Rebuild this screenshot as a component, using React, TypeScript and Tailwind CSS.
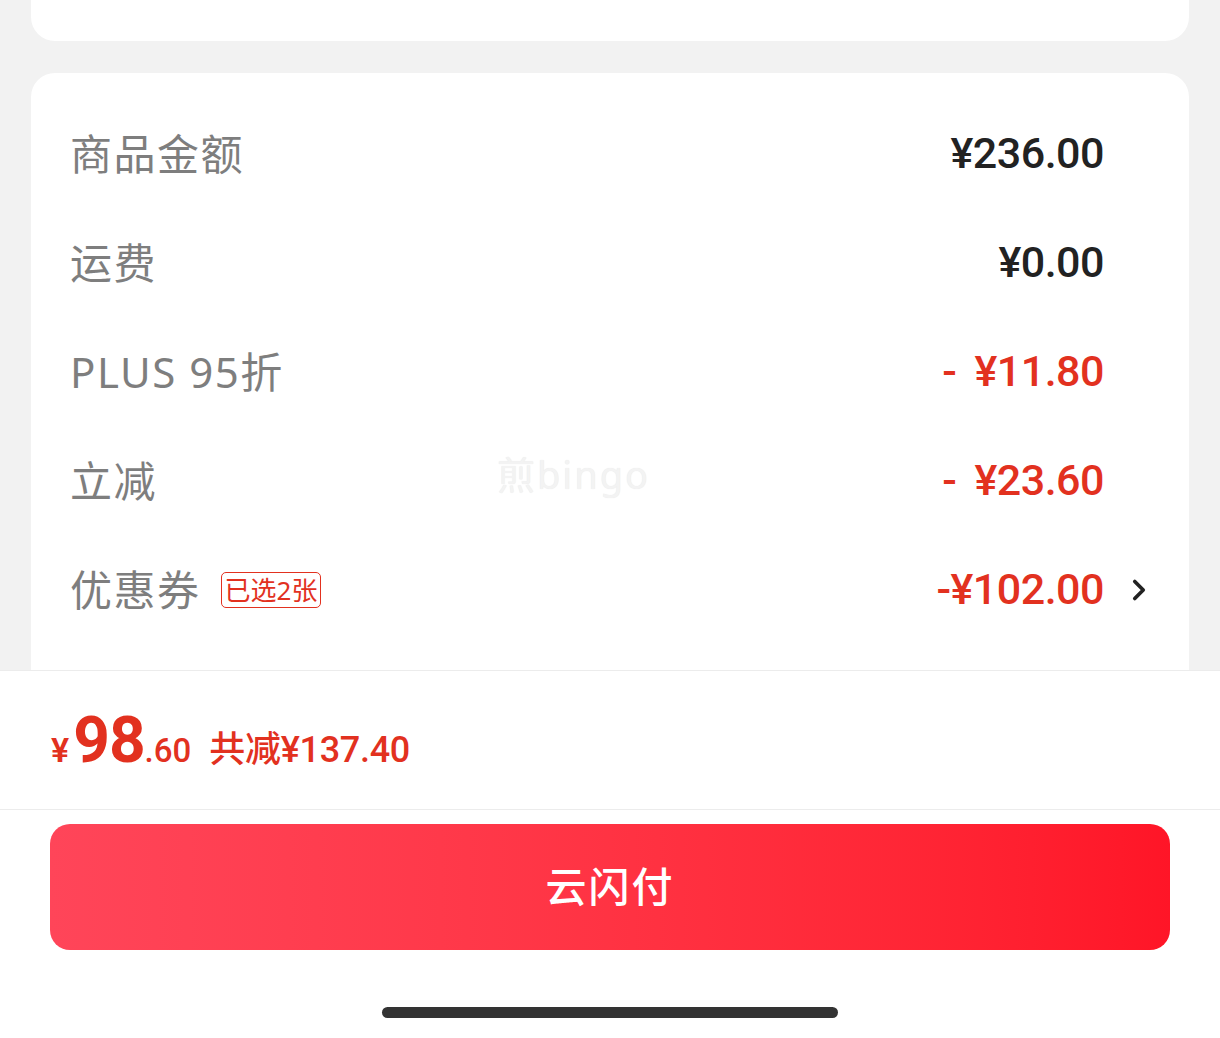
import { ChevronRight } from 'lucide-react';

const rows = [
  { label: '商品金额', value: '¥236.00', minus: false },
  { label: '运费', value: '¥0.00', minus: false },
  { label: 'PLUS 95折', value: '¥11.80', minus: true },
  { label: '立减', value: '¥23.60', minus: true },
];

const numFont = { fontFamily: 'Roboto, "Noto Sans CJK SC", sans-serif' };

const App = () => {
  return (
    <div
      className="flex h-[1038px] w-full flex-col overflow-hidden bg-[#f2f2f2]"
      style={{ fontFamily: '"Noto Sans", "Noto Sans CJK SC", sans-serif' }}
    >
      {/* scroll area */}
      <div className="relative flex-1 overflow-hidden px-[31px]">
        <div className="h-[41px] rounded-b-[24px] bg-white"></div>

        <div className="mt-[32px] h-[700px] rounded-t-[24px] bg-white pl-[39px] pr-[85px] pt-[26px]">
          {rows.map((row) => (
            <div key={row.label} className="flex h-[109px] items-center justify-between">
              <span className="text-[42px] tracking-[1.5px] text-[#7e7e7e]">{row.label}</span>
              <span
                className={`text-[43px] font-medium tracking-[-0.5px] ${row.minus ? 'text-[#e2311f]' : 'text-[#222222]'}`}
                style={numFont}
              >
                {row.minus && <span className="mr-[18px]">-</span>}
                {row.value}
              </span>
            </div>
          ))}

          {/* 优惠券 */}
          <div className="relative flex h-[109px] items-center justify-between">
            <div className="flex items-center">
              <span className="text-[42px] tracking-[1.5px] text-[#7e7e7e]">优惠券</span>
              <span className="ml-[20px] rounded-[5px] border border-[#e2311f] px-[3px] py-[1px] text-[26px] leading-[32px] text-[#e2311f]">
                已选2张
              </span>
            </div>
            <span className="text-[43px] font-medium tracking-[-0.5px] text-[#e2311f]" style={numFont}>
              -¥102.00
            </span>
            <ChevronRight
              className="absolute right-[-52px] top-1/2 h-[34px] w-[34px] -translate-y-1/2 text-[#222222]"
              strokeWidth={2.6}
            />
          </div>
        </div>

        {/* watermark */}
        <span className="absolute left-[497px] top-[446px] text-[38px] tracking-[2px] text-[#f3f3f3] [text-shadow:0_0_1px_#e6e6e6]">
          煎bingo
        </span>
      </div>

      {/* bottom bar */}
      <div className="h-[368px] shrink-0 border-t border-[#ececec] bg-white">
        <div className="flex h-[139px] items-center border-b border-[#ececec] pl-[51px] text-[#e2311f]" style={numFont}>
          <div className="flex items-baseline pt-[6px]">
            <span className="text-[34px] font-semibold">¥</span>
            <span className="ml-[4px] text-[64px] font-bold leading-none tracking-[-1px]">98</span>
            <span className="text-[33px] font-medium">.60</span>
            <span className="ml-[18px] text-[36px] font-medium tracking-[-0.3px]">共减¥137.40</span>
          </div>
        </div>

        <div className="px-[50px] pt-[14px]">
          <button className="flex h-[126px] w-full items-center justify-center rounded-[20px] bg-gradient-to-r from-[#ff4559] to-[#ff1527] text-[41px] font-medium tracking-[2px] text-white">
            云闪付
          </button>
        </div>

        <div className="mt-[57px] flex justify-center">
          <div className="h-[11px] w-[456px] rounded-full bg-[#333333]"></div>
        </div>
      </div>
    </div>
  );
};

export default App;
